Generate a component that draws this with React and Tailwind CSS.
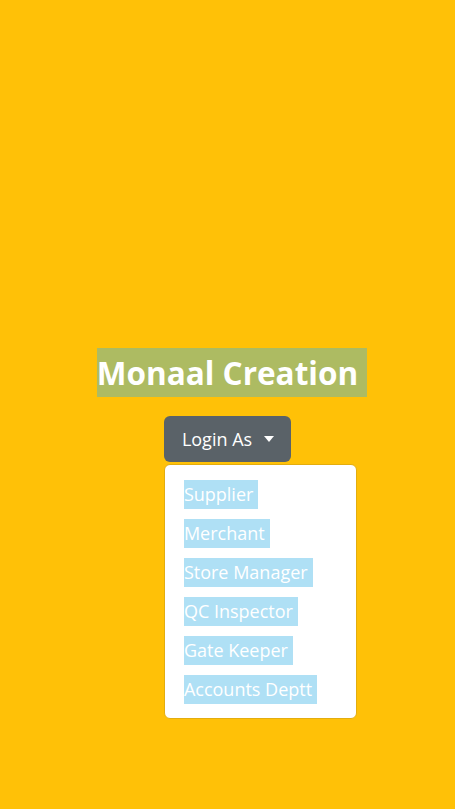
import React from 'react';

const roles = ['Supplier', 'Merchant', 'Store Manager', 'QC Inspector', 'Gate Keeper', 'Accounts Deptt'];

function App() {
  return (
    <div className="min-h-screen bg-[#ffc107] font-['Open_Sans',sans-serif] flex flex-col items-center pt-[348px]">
      <h1 className="ml-[9px] bg-[#adbb62] text-white font-bold text-[31.5px] leading-[49px] h-[49px] pr-[9px]">
        Monaal Creation
      </h1>

      <div className="relative mt-[19px]">
        <button className="flex items-center gap-3 h-[46px] pl-[18px] pr-[17px] bg-[#5a6268] text-white text-[18px] rounded-[6px]">
          Login As
          <span className="w-0 h-0 border-x-[5px] border-x-transparent border-t-[6px] border-t-white"></span>
        </button>

        <ul className="absolute left-0 top-[48px] w-[193px] bg-white border border-[#e3ad0f] rounded-[6px] pt-[15px] pb-[14px] pl-[19px] flex flex-col gap-[10px]">
          {roles.map(r => (
            <li key={r}>
              <span className="inline-block bg-[#afe0f5] text-white text-[18px] leading-[29px] pr-[5px]">{r}</span>
            </li>
          ))}
        </ul>
      </div>
    </div>
  );
}

export default App;
